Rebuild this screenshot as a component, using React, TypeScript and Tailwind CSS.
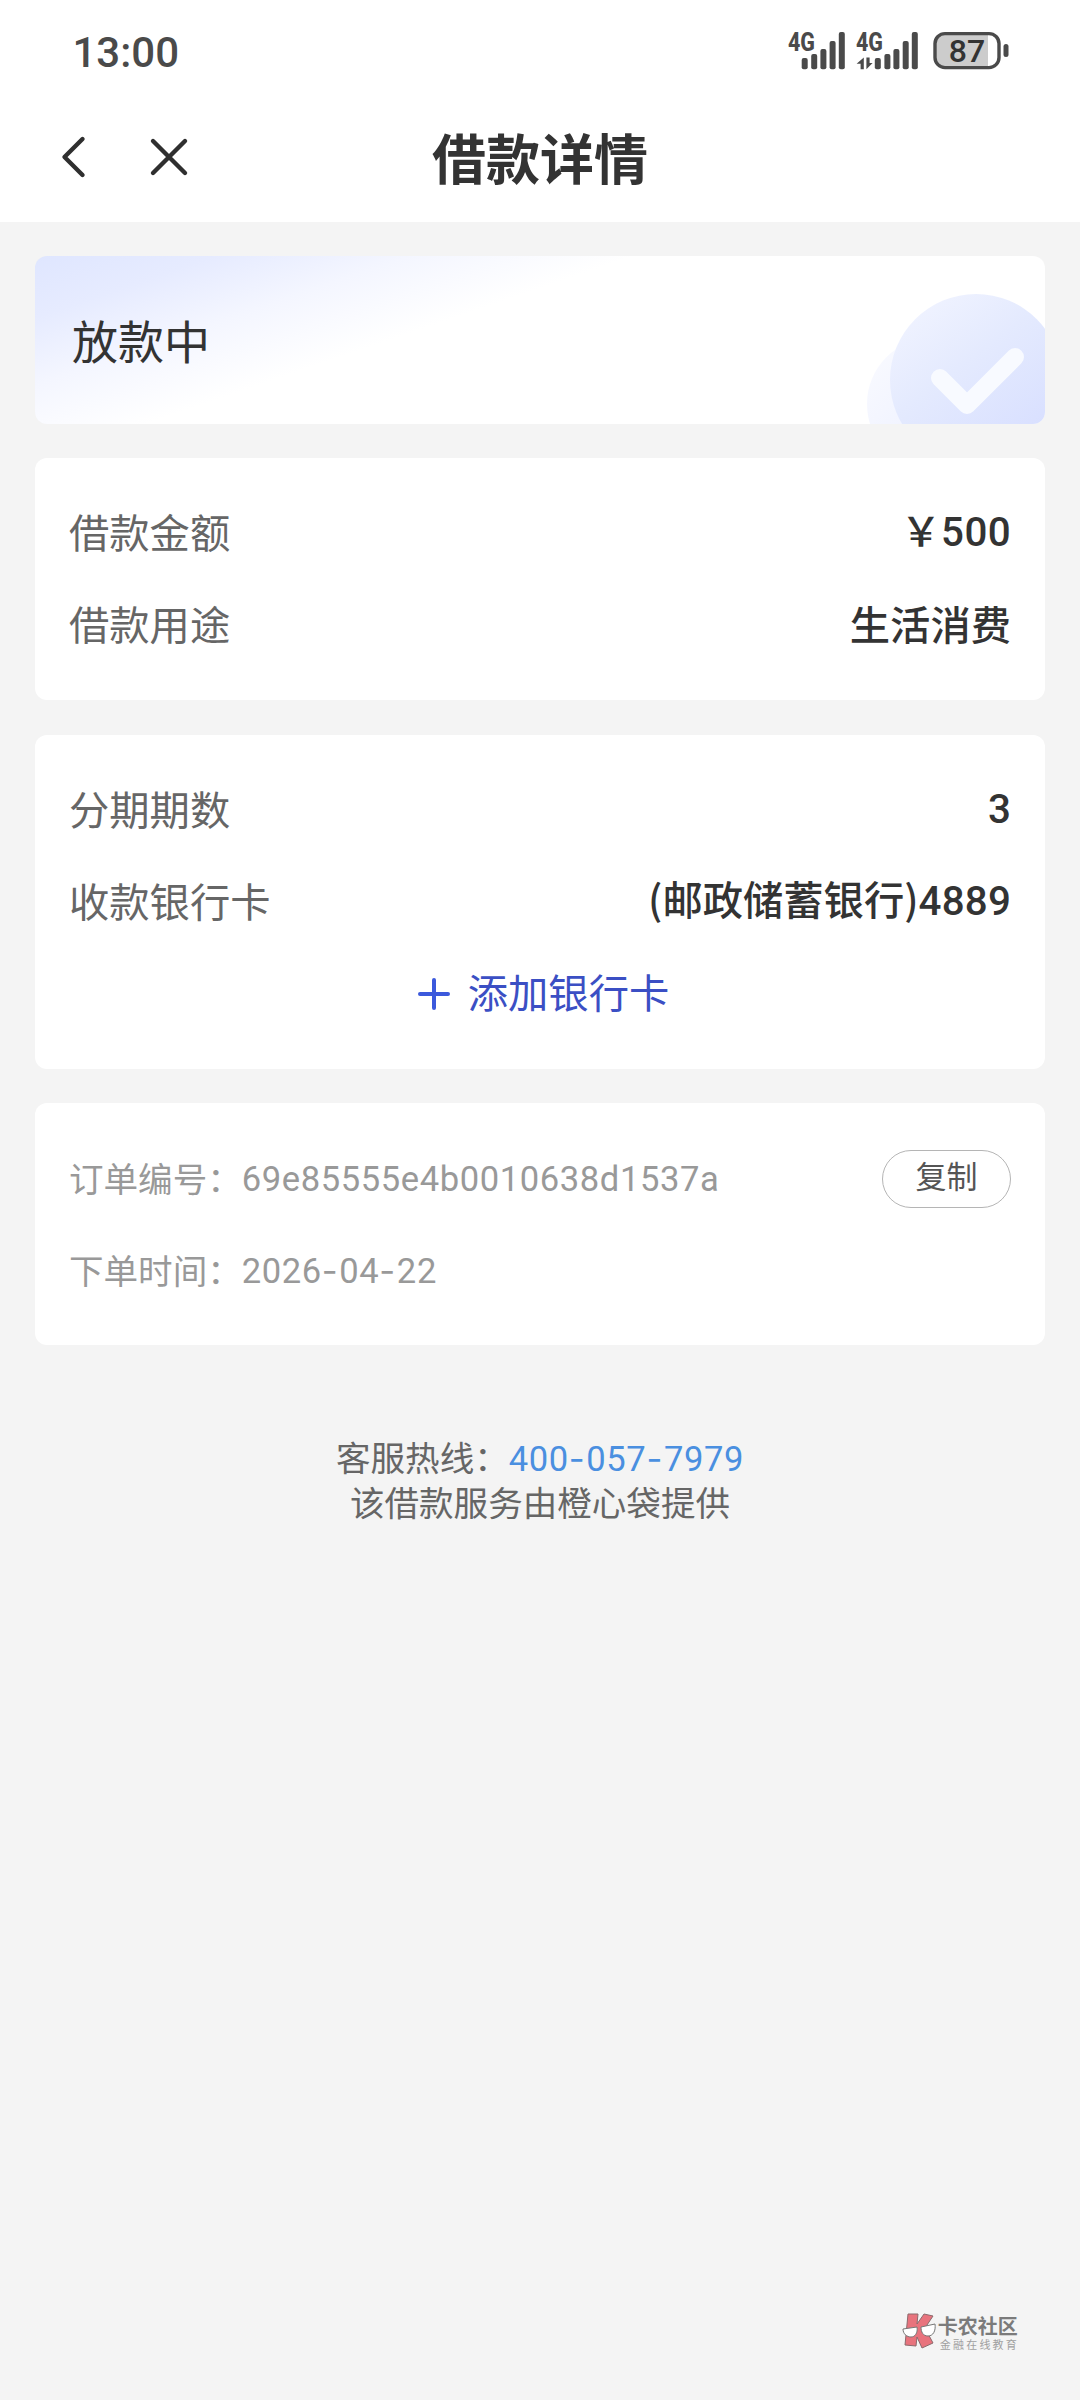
import type { ReactNode } from "react";

const orderInfo = {
  amount: "500",
  purpose: "生活消费",
  periods: "3",
  bank: "邮政储蓄银行",
  tail: "4889",
  orderNo: "69e85555e4b0010638d1537a",
  date: "2026-04-22",
  hotline: "400-057-7979",
};

// the plain hyphen is too short next to the digits, so it gets a wider face
function Digits({ text }: { text: string }) {
  return (
    <span className="font-[Roboto] tracking-[0.6px]">
      {text.split("-").map((part, i) => (
        <span key={i}>
          {i > 0 && <span className="font-[Inter] tracking-[1.6px]">-</span>}
          {part}
        </span>
      ))}
    </span>
  );
}

function Signal({ data }: { data?: boolean }) {
  const bars = data ? [18.8, 28.4, 37.4, 46.7, 55.8] : [13.7, 23.2, 32.4, 41.6, 50.8];
  const tops = [27, 23, 18, 10, 1];

  return (
    <svg className="overflow-visible" width={data ? 64 : 58} height="40" fill="#4a4a4a">
      <text
        x="0"
        y="19.5"
        fontFamily="Roboto"
        fontWeight="800"
        fontSize="25.5"
        textLength="27"
        lengthAdjust="spacingAndGlyphs"
      >
        4G
      </text>
      {data && <path d="M7.8 26.5v11.8H4.6v-5.5H.6zM10.4 26.5v11.8l6.2-6.4h-3v-5.4z" />}
      {bars.map((x, i) => (
        <rect key={x} x={x} y={tops[i]} width="6" height={38.3 - tops[i]} rx="2" />
      ))}
    </svg>
  );
}

function Battery() {
  return (
    <svg className="ml-[3px]" width="77" height="40" viewBox="0 0 77 40">
      <path d="M10 3h45v33H10a8 8 0 0 1-8-8V11a8 8 0 0 1 8-8z" fill="#cccccc" />
      <rect x="2" y="2.6" width="64" height="34" rx="10" fill="none" stroke="#4a4a4a" strokeWidth="3.4" />
      <rect x="70.5" y="13" width="5" height="13" rx="2.5" fill="#4a4a4a" />
      <text x="34" y="31" textAnchor="middle" fontFamily="Roboto" fontWeight="500" fontSize="32" fill="#333">
        87
      </text>
    </svg>
  );
}

function StatusBar() {
  return (
    <div className="flex h-[92px] items-start justify-between pt-[31px] pr-[70px] pl-[72.5px]">
      <span className="pt-px font-[Roboto] text-[42px] leading-[42px] font-medium text-[#4a4a4a]">
        13:00
      </span>
      <div className="flex gap-[10px]">
        <Signal />
        <Signal data />
        <Battery />
      </div>
    </div>
  );
}

function NavBar() {
  return (
    <div className="grid h-[130px] grid-cols-[1fr_auto_1fr] items-center">
      <svg
        className="ml-[54px]"
        width="140"
        height="50"
        viewBox="0 0 140 50"
        fill="none"
        stroke="#2f2f2f"
        strokeWidth="4.4"
        strokeLinecap="round"
        strokeLinejoin="round"
      >
        <path d="M28.5 7 10.5 25l18 18" />
        <path d="M99 9l32 32M131 9 99 41" />
      </svg>
      <h1 className="text-[54px] leading-[60px] font-bold">借款详情</h1>
      <span />
    </div>
  );
}

function Banner() {
  return (
    <section className="flex h-[168px] justify-between overflow-hidden rounded-[12px] bg-white bg-[linear-gradient(161deg,#dfe6ff_0%,#e6ebff_12%,#f4f6ff_25%,#ffffff_40%)] pl-[37px]">
      <p className="pt-[49px] text-[46px] leading-[68px]">放款中</p>
      <svg width="180" height="168" viewBox="0 0 180 168">
        <defs>
          <linearGradient id="disc" x1="0.15" y1="0.05" x2="0.75" y2="0.85">
            <stop offset="0" stopColor="#f0f3ff" />
            <stop offset="0.45" stopColor="#e4eafe" />
            <stop offset="1" stopColor="#d9e0ff" />
          </linearGradient>
          <linearGradient id="back" x1="0" y1="0" x2="1" y2="1">
            <stop offset="0" stopColor="#fafbff" />
            <stop offset="1" stopColor="#e8ecff" />
          </linearGradient>
        </defs>
        <circle cx="68" cy="148" r="66" fill="url(#back)" />
        <circle cx="111" cy="124" r="86" fill="url(#disc)" />
        <path
          d="M75 122l27 27L150 101"
          fill="none"
          stroke="#f8faff"
          strokeWidth="18"
          strokeLinecap="round"
          strokeLinejoin="round"
        />
      </svg>
    </section>
  );
}

function Card({ children }: { children: ReactNode }) {
  return <section className="rounded-[12px] bg-white px-[34px] pt-[30px] pb-[28px]">{children}</section>;
}

function Row({ label, children }: { label: string; children: ReactNode }) {
  return (
    <div className="flex h-[92px] items-center justify-between pb-[6px] text-[40.3px] leading-[58px]">
      <span className="text-[#666]">{label}</span>
      <span className="font-medium">{children}</span>
    </div>
  );
}

function Watermark() {
  return (
    <div className="absolute right-[61px] bottom-[49px] flex items-end">
      <svg width="35" height="38" viewBox="0 0 35 38">
        <path
          d="M6 1h10l-1 10 7-10 9 2-8 12 8 15-11 5-5-11-1 9-11-1z"
          fill="#e8737d"
          stroke="#8b6a6d"
          strokeWidth="1"
        />
        <path
          d="M1 16l14-2c1 6-2 10-6 10s-8-3-8-8zM19 14l14-3c1 7-2 12-7 12s-7-4-7-9z"
          fill="#fff"
          stroke="#777"
          strokeWidth="1"
        />
      </svg>
      <div className="ml-px">
        <p className="text-[20px] leading-[22px] font-bold text-[#7b7b7b]">卡农社区</p>
        <p className="pl-[2px] text-[11px] leading-[14px] tracking-[2.2px] text-[#a0a0a0]">金融在线教育</p>
      </div>
    </div>
  );
}

export default function App() {
  return (
    <div className="relative h-[2400px] w-[1080px] overflow-hidden bg-[#f4f4f4] font-['Noto_Sans_CJK_SC',sans-serif] text-[#333]">
      <header className="bg-white">
        <StatusBar />
        <NavBar />
      </header>

      <main className="flex flex-col gap-[34.4px] px-[35px] pt-[34px]">
        <Banner />

        <Card>
          <Row label="借款金额">
            ￥<span className="font-[Roboto] tracking-[0.4px]">{orderInfo.amount}</span>
          </Row>
          <Row label="借款用途">{orderInfo.purpose}</Row>
        </Card>

        <Card>
          <Row label="分期期数">
            <span className="font-[Roboto]">{orderInfo.periods}</span>
          </Row>
          <Row label="收款银行卡">
            ({orderInfo.bank})<span className="font-[Roboto] tracking-[0.2px]">{orderInfo.tail}</span>
          </Row>
          <button className="flex h-[92px] w-full items-center justify-center gap-[18px] pb-[2px] pl-[7px] text-[40.3px] leading-[58px] text-[#3b4fc4]">
            <svg
              width="32"
              height="32"
              viewBox="0 0 32 32"
              stroke="#3c59dc"
              strokeWidth="4"
              strokeLinecap="round"
            >
              <path d="M16 2v28M2 16h28" />
            </svg>
            <span className="pb-[6px]">添加银行卡</span>
          </button>
        </Card>

        <Card>
          <div className="flex h-[92px] items-center text-[34.56px] leading-[50px] text-[#999]">
            <span className="pb-[5px]">订单编号：</span>
            <span className="pb-[3px] tracking-[0.7px]">
              <Digits text={orderInfo.orderNo} />
            </span>
            <button className="ml-auto h-[58px] w-[129px] rounded-full border border-[#b5b5b5] pb-[9px] text-[31px] leading-[48px] text-[#555]">
              复制
            </button>
          </div>
          <div className="flex h-[92px] items-center text-[34.56px] leading-[50px] text-[#999]">
            <span className="pb-[5px]">下单时间：</span>
            <Digits text={orderInfo.date} />
          </div>
        </Card>
      </main>

      <footer className="mt-[89px] text-center text-[34.56px] leading-[45px] text-[#666]">
        <p className="h-[45px]">
          客服热线：
          <a className="text-[#4a8fe0]">
            <Digits text={orderInfo.hotline} />
          </a>
        </p>
        <p className="h-[45px]">该借款服务由橙心袋提供</p>
      </footer>

      <Watermark />
    </div>
  );
}
